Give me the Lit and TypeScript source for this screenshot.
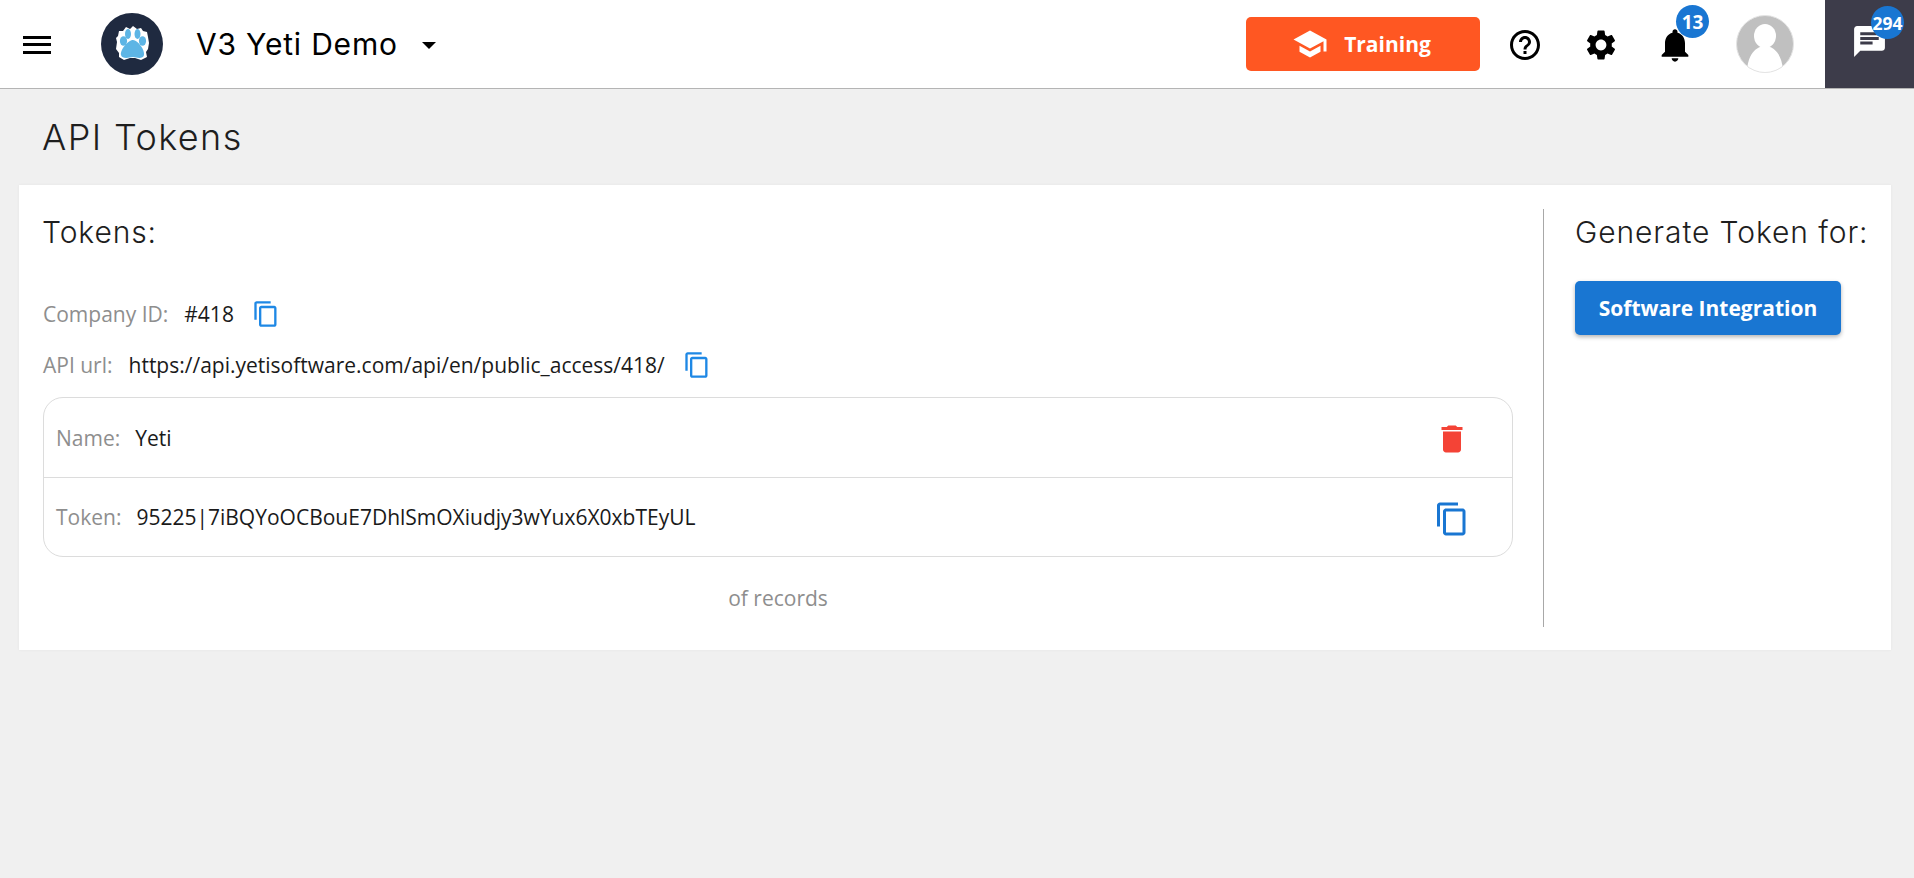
import { LitElement, html, css, svg } from "lit";
import { customElement } from "lit/decorators.js";

const copyPath = "M16 1H4c-1.1 0-2 .9-2 2v14h2V3h12V1zm3 4H8c-1.1 0-2 .9-2 2v14c0 1.1.9 2 2 2h11c1.1 0 2-.9 2-2V7c0-1.1-.9-2-2-2zm0 16H8V7h11v14z";
const icon = (d: string, size: number, color: string, cls = "") => html`<svg class=${cls} width=${size} height=${size} viewBox="0 0 24 24" fill=${color}>${svg`<path d=${d}></path>`}</svg>`;

@customElement("app-root")
export class AppRoot extends LitElement {
  static styles = css`
    :host { display: block; height: 878px; background: #f0f0f0; font-family: "Open Sans", sans-serif; color: #1a1a1a; overflow: hidden; }
    * { box-sizing: border-box; }
    .top { height: 89px; background: #fff; border-bottom: 1px solid #b4b4b4; display: flex; align-items: center; padding-left: 23px; }
    .menu { display: block; margin-right: 47px; }
    .logo { display: block; margin-right: 32px; }
    .org { font-family: "Inter", "Liberation Sans", sans-serif; font-size: 30px; letter-spacing: 0.8px; color: #000; width: 225px; white-space: nowrap; }
    .caret { width: 0; height: 0; border-left: 7.5px solid transparent; border-right: 7.5px solid transparent; border-top: 7px solid #000; margin-top: 3px; margin-left: 1px; }
    .spacer { flex: 1; }
    .train { width: 234px; height: 54px; margin-right: 27px; background: #ff5722; border-radius: 5px; color: #fff; font-weight: 700; font-size: 21px; display: flex; align-items: center; justify-content: center; gap: 16px; padding-right: 3px; margin-top: -1px; }
    .ic { position: relative; display: flex; align-items: center; justify-content: center; margin-top: 2px; }
    .help { margin-right: 40px; }
    .gear { margin-right: 36px; }
    .bell { margin-right: 41px; }
    .badge { position: absolute; background: #1976d2; color: #fff; border-radius: 50%; font-weight: 700; display: flex; align-items: center; justify-content: center; font-size: 19px; }
    .bell .badge { width: 33px; height: 33px; top: -20px; left: 21px; }
    .avatar { display: block; margin-right: 31px; }
    .chat { width: 89px; height: 88px; background: #3d3c4a; position: relative; display: flex; align-items: center; justify-content: center; align-self: flex-start; }
    .chat .badge { width: 33px; height: 33px; top: 6px; left: 46px; font-size: 17.5px; }
    .chat svg { margin-bottom: 6px; }
    h1 { margin: 0; padding: 28px 0 0 42px; height: 96px; font-family: "Inter", "Liberation Sans", sans-serif; font-weight: 300; font-size: 36px; letter-spacing: 1.4px; line-height: 40px; color: #1e1e1e; }
    .card { margin: 0 23px 0 19px; height: 465px; background: #fff; box-shadow: 0 0 3px rgba(0,0,0,.05); padding: 24px 24px 23px 24px; display: flex; }
    .left { flex: none; width: 1501px; border-right: 1px solid #a8a8a8; padding-right: 30px; display: flex; flex-direction: column; }
    .left h2 { margin-left: -1px; }
    .right { padding-left: 31px; }
    h2 { margin: 0; font-family: "Inter", "Liberation Sans", sans-serif; font-weight: 300; font-size: 30px; letter-spacing: 0.9px; line-height: 46px; color: #1e1e1e; white-space: nowrap; }
    .label { color: #8e8e8e; }
    .line { display: flex; align-items: center; font-size: 21px; line-height: 27px; height: 36px; white-space: nowrap; }
    .first { margin-top: 41px; }
    .second { margin-top: 15px; }
    .line .label { margin-right: 16px; }
    .line svg { margin-left: 18px; }
    .box { margin-top: 14px; border: 1px solid #dcdcdc; border-radius: 20px; height: 160px; }
    .row { height: 79px; display: flex; align-items: center; padding-left: 12px; font-size: 21px; position: relative; }
    .row + .row { border-top: 1px solid #dcdcdc; height: 79px; }
    .row .label { margin-right: 15px; }
    .act { margin-left: auto; display: flex; align-items: center; justify-content: center; width: 48px; margin-right: 36px; margin-top: 3px; }
    .records { text-align: center; color: #8e8e8e; font-size: 21px; margin-top: 28px; line-height: 27px; padding-left: 0; }
    .gen { margin-top: 26px; width: 266px; height: 54px; background: #1976d2; border-radius: 5px; color: #fff; font-weight: 700; font-size: 21px; display: flex; align-items: center; justify-content: center; box-shadow: 0 2px 4px rgba(0,0,0,.3); white-space: nowrap; }
  `;

  render() {
    return html`
      <div class="top">
        <svg class="menu" width="30" height="22" viewBox="0 0 30 22" fill="#000"><rect y="3" width="28" height="3"></rect><rect y="10" width="28" height="3"></rect><rect y="18" width="28" height="3"></rect></svg>
        <svg class="logo" width="64" height="64" viewBox="0 0 64 64">
          <circle cx="32" cy="32" r="31" fill="#1f2a40"></circle>
          <path d="M17 30 L16 26 L18 24 L19 19 L23 19 L26 15 L30 17 L33 14 L37 17 L41 16 L43 19 L47 20 L48 25 L49 31 L48 37 L46 40 L47 45 L41 48 L35 46 L30 46 L24 48 L19 45 L19 41 L16 37 Z" fill="#fff"></path>
          <ellipse cx="23.500" cy="29" rx="3.600" ry="4.800" fill="#5db5e5"></ellipse>
          <ellipse cx="28" cy="22" rx="3" ry="5" fill="#5db5e5"></ellipse>
          <ellipse cx="37.500" cy="22" rx="3" ry="5" fill="#5db5e5"></ellipse>
          <ellipse cx="42.500" cy="29" rx="3.600" ry="4.800" fill="#5db5e5"></ellipse>
          <path d="M33 28 C38 28 45 38 44 43 C43 47 38 46 33 45 C28 46 22 47 21 43 C20 38 28 28 33 28 Z" fill="#5db5e5"></path>
        </svg>
        <div class="org">V3 Yeti Demo</div>
        <div class="caret"></div>
        <div class="spacer"></div>
        <div class="train">
          ${icon("M5 13.180v4L12 21l7-3.820v-4L12 17l-7-3.820zM12 3 1 9l11 6 9-4.910V17h2V9L12 3z", 36, "#fff")}
          <span>Training</span>
        </div>
        <div class="ic help">${icon("M11 18h2v-2h-2v2zm1-16C6.480 2 2 6.480 2 12s4.480 10 10 10 10-4.480 10-10S17.520 2 12 2zm0 18c-4.410 0-8-3.590-8-8s3.590-8 8-8 8 3.590 8 8-3.590 8-8 8zm0-14c-2.210 0-4 1.790-4 4h2c0-1.100.9-2 2-2s2 .9 2 2c0 2-3 1.750-3 5h2c0-2.250 3-2.500 3-5 0-2.210-1.790-4-4-4z", 36, "#000")}</div>
        <div class="ic gear">${icon("M19.140 12.940c.04-.3.060-.61.060-.94 0-.32-.02-.64-.07-.94l2.030-1.580c.18-.14.230-.41.120-.61l-1.920-3.320c-.12-.22-.37-.29-.59-.22l-2.390.96c-.5-.38-1.030-.7-1.620-.94l-.36-2.540c-.04-.24-.24-.41-.48-.41h-3.840c-.24 0-.43.170-.47.410l-.36 2.540c-.59.240-1.130.570-1.620.94l-2.390-.96c-.22-.08-.47 0-.59.220L2.740 8.870c-.12.210-.08.470.12.610l2.030 1.580c-.05.3-.09.630-.09.940s.02.640.07.940l-2.030 1.580c-.18.140-.23.410-.12.610l1.920 3.320c.12.220.37.290.59.220l2.390-.96c.5.380 1.030.7 1.620.94l.36 2.540c.05.240.24.410.48.410h3.840c.24 0 .44-.17.47-.41l.36-2.540c.59-.24 1.130-.56 1.620-.94l2.390.96c.22.080.47 0 .59-.22l1.920-3.320c.12-.22.070-.47-.12-.61l-2.010-1.580zM12 15.600c-1.980 0-3.600-1.620-3.600-3.600s1.620-3.600 3.600-3.600 3.600 1.620 3.600 3.600-1.620 3.600-3.600 3.600z", 36, "#000")}</div>
        <div class="ic bell">${icon("M12 22c1.100 0 2-.9 2-2h-4c0 1.100.9 2 2 2zm6-6v-5c0-3.070-1.630-5.640-4.500-6.320V4c0-.83-.67-1.500-1.500-1.500s-1.500.67-1.500 1.500v.68C7.640 5.360 6 7.920 6 11v5l-2 2v1h16v-1l-2-2z", 40, "#000")}<span class="badge">13</span></div>
        <svg class="avatar" width="58" height="58" viewBox="0 0 58 58">
          <defs><clipPath id="av"><circle cx="29" cy="29" r="28.500"></circle></clipPath></defs>
          <g clip-path="url(#av)"><rect width="58" height="58" fill="#c0c0c0"></rect>
          <ellipse cx="29" cy="21" rx="11" ry="12" fill="#fff"></ellipse>
          <path d="M11 58 C11 40 20 31 29 31 C38 31 47 40 47 58 Z" fill="#fff"></path></g>
          <circle cx="29" cy="29" r="28.500" fill="none" stroke="#e4e4e4"></circle>
        </svg>
        <div class="chat">${icon("M20 2H4c-1.100 0-1.990.9-1.990 2L2 22l4-4h14c1.100 0 2-.9 2-2V4c0-1.100-.9-2-2-2zM6 9h12v2H6V9zm8 5H6v-2h8v2zm4-6H6V6h12v2z", 37, "#fff")}<span class="badge">294</span></div>
      </div>
      <h1>API Tokens</h1>
      <div class="card">
        <div class="left">
          <h2>Tokens:</h2>
          <div class="line first"><span class="label">Company ID:</span><span>#418</span>${icon(copyPath, 28, "#1e88e5")}</div>
          <div class="line second"><span class="label">API url:</span><span>https://api.yetisoftware.com/api/en/public_access/418/</span>${icon(copyPath, 28, "#1e88e5")}</div>
          <div class="box">
            <div class="row"><span class="label">Name:</span><span>Yeti</span><div class="act">${icon("M6 19c0 1.100.9 2 2 2h8c1.100 0 2-.9 2-2V7H6v12zM19 4h-3.500l-1-1h-5l-1 1H5v2h14V4z", 36, "#f44336")}</div></div>
            <div class="row"><span class="label">Token:</span><span>95225|7iBQYoOCBouE7DhlSmOXiudjy3wYux6X0xbTEyUL</span><div class="act">${icon(copyPath, 36, "#1976d2")}</div></div>
          </div>
          <div class="records">of records</div>
        </div>
        <div class="right">
          <h2>Generate Token for:</h2>
          <div class="gen">Software Integration</div>
        </div>
      </div>
    `;
  }
}
